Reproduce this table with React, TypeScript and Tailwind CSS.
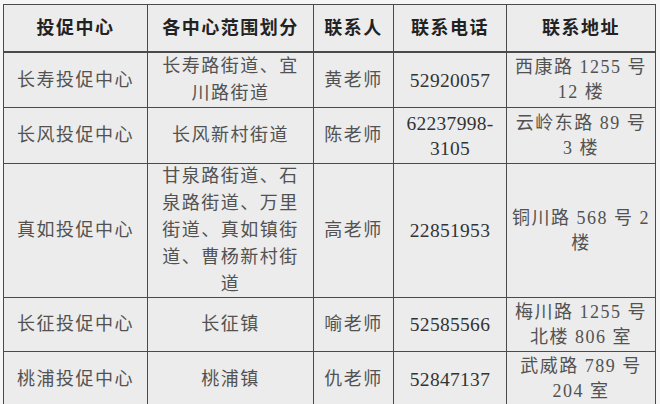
import React from 'react';

type Row = {
  center: string;
  area: string[];
  contact: string;
  phone: string[];
  address: string[];
  height: string;
};

const rows: Row[] = [
  {
    center: '长寿投促中心',
    area: ['长寿路街道、宜', '川路街道'],
    contact: '黄老师',
    phone: ['52920057'],
    address: ['西康路 1255 号', '12 楼'],
    height: 'h-[55px]',
  },
  {
    center: '长风投促中心',
    area: ['长风新村街道'],
    contact: '陈老师',
    phone: ['62237998-', '3105'],
    address: ['云岭东路 89 号', '3 楼'],
    height: 'h-[56px]',
  },
  {
    center: '真如投促中心',
    area: ['甘泉路街道、石', '泉路街道、万里', '街道、真如镇街', '道、曹杨新村街', '道'],
    contact: '高老师',
    phone: ['22851953'],
    address: ['铜川路 568 号 2', '楼'],
    height: 'h-[134px]',
  },
  {
    center: '长征投促中心',
    area: ['长征镇'],
    contact: '喻老师',
    phone: ['52585566'],
    address: ['梅川路 1255 号', '北楼 806 室'],
    height: 'h-[54px]',
  },
  {
    center: '桃浦投促中心',
    area: ['桃浦镇'],
    contact: '仇老师',
    phone: ['52847137'],
    address: ['武威路 789 号', '204 室'],
    height: 'h-[55px]',
  },
];

const headers = ['投促中心', '各中心范围划分', '联系人', '联系电话', '联系地址'];

const Lines = ({ lines }: { lines: string[] }) => (
  <>
    {lines.map((l, i) => (
      <span key={i} className="block whitespace-nowrap">
        {l}
      </span>
    ))}
  </>
);

const cell =
  'flex flex-col items-center justify-center text-center border-r border-b border-[#4a4a4a]';

export default function App() {
  return (
    <div
      className="w-[660px] h-[404px] overflow-hidden bg-[#f6f6f6] pt-[4px] pl-[3px]"
      style={{ fontFamily: '"Liberation Serif", "Noto Sans CJK SC", serif' }}
    >
      <div className="grid w-[653px] grid-cols-[144px_166px_80px_113px_149px] border-l border-t border-[#4a4a4a] bg-[#ececec] text-[18px] leading-[25px] tracking-[1.5px] text-[#525252]">
        {headers.map((h) => (
          <div
            key={h}
            className="flex h-[48px] items-center justify-center border-r border-b-2 border-[#4a4a4a] font-bold text-[#222]"
          >
            {h}
          </div>
        ))}
        {rows.map((r) => (
          <React.Fragment key={r.center}>
            <div className={`${cell} ${r.height}`}>{r.center}</div>
            <div className={`${cell} ${r.height} leading-[27px]`}>
              <Lines lines={r.area} />
            </div>
            <div className={`${cell} ${r.height}`}>{r.contact}</div>
            <div className={`${cell} ${r.height} text-[19.5px] text-[#333] tracking-[0.3px]`}>
              <Lines lines={r.phone} />
            </div>
            <div className={`${cell} ${r.height}`}>
              <Lines lines={r.address} />
            </div>
          </React.Fragment>
        ))}
      </div>
    </div>
  );
}
